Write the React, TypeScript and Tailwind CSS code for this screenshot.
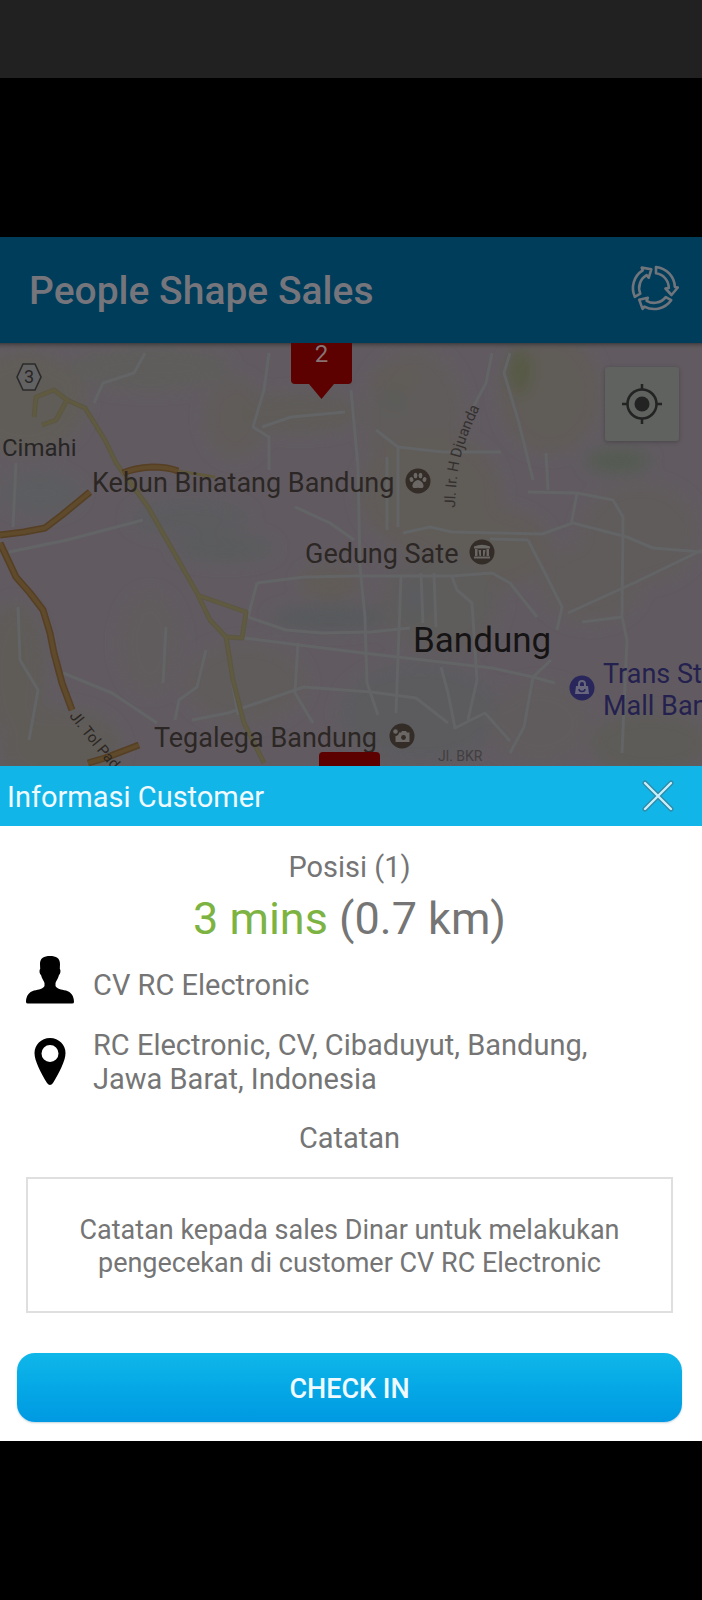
import type { ReactNode } from "react";

const patches: [number, number, number, number, string][] = [
  [25, 60, 60, 50, "#605d59"],
  [150, 25, 80, 22, "#5e5d5b"],
  [235, 75, 30, 40, "#605b5a"],
  [300, 70, 60, 20, "#5f5b59"],
  [40, 150, 40, 20, "#5b5d60"],
  [190, 175, 60, 18, "#5c5c5f"],
  [225, 205, 50, 14, "#5a5c5d"],
  [330, 275, 60, 12, "#565a5c"],
  [330, 240, 30, 16, "#605b57"],
  [15, 330, 30, 70, "#5f5c58"],
  [60, 405, 60, 40, "#5f5c58"],
  [150, 300, 30, 50, "#605b5d"],
  [415, 75, 50, 70, "#615c5b"],
  [550, 50, 50, 60, "#615c59"],
  [430, 150, 70, 60, "#605c59"],
  [490, 205, 60, 40, "#605b59"],
  [440, 260, 60, 50, "#5e5b5b"],
  [415, 255, 12, 20, "#5a5b61"],
  [640, 190, 60, 50, "#605c5c"],
  [590, 240, 50, 40, "#615c5b"],
  [420, 370, 80, 50, "#5b5c5e"],
  [650, 400, 60, 30, "#5d5c58"],
  [540, 380, 50, 40, "#615b5d"],
  [245, 340, 60, 40, "#605b5b"],
  [520, 28, 10, 24, "#545a40"],
  [618, 118, 32, 12, "#525b51"],
  [395, 58, 12, 10, "#585c58"],
  [395, 35, 24, 10, "#615c56"],
];

const minorRoads = [
  "M351 47 L358 124 L360 224 L365 274 L367 340 L378 372",
  "M387 114 L387 187 M398 104 L398 184 M401 234 L396 370",
  "M295 164 L330 180 L354 197",
  "M403 190 L430 184 L452 189 L542 191 L573 180 L627 194 L653 205 L702 209",
  "M257 240 L304 234 L358 233 L452 233 L492 230 L510 240 L537 274",
  "M248 274 L286 287 L322 290 L371 289 L410 285",
  "M244 295 L363 310 L492 325 L533 334 L555 340",
  "M192 377 L228 370 L304 344 L371 349 L416 355 L448 380",
  "M298 300 L295 350 L313 380",
  "M551 317 L533 334 L524 384 L510 410",
  "M528 197 L545 230 L562 264 L557 287",
  "M528 149 L577 150 L613 157 L623 174 L622 274 L627 297 L622 410",
  "M577 150 L571 182",
  "M568 270 L636 239 L702 207 M582 279 L622 274",
  "M492 10 L486 40 L470 70",
  "M510 10 L504 30 L519 80 L533 137 M546 110 L548 147",
  "M9 209 L67 197 L143 177",
  "M16 120 L13 184 M18 264 L20 317 L38 347 L29 397",
  "M63 330 L112 350 L157 380",
  "M166 284 L163 340 M206 307 L197 344 L179 357 L175 377",
  "M145 10 L134 30 L103 40 L94 60",
  "M269 10 L264 47 L253 84 L269 94 L269 127 M262 84 L291 74 L345 69",
  "M376 87 L398 104 L443 109 L501 109",
  "M421 230 L423 280 M434 230 L436 284",
  "M452 234 L457 247 L472 260 L477 337 L468 377",
  "M441 324 L448 350 L455 385 L485 370 L510 398",
  "M257 240 L248 274 M232 337 L238 372",
  "M490 196 L528 197",
];

const yellowRoads = [
  "M34 74 L36 54 L54 47 L67 57 L56 77 L42 82",
  "M67 57 L85 65 L105 97 L116 120 L148 164 L197 250 L210 277 L226 294 L233 337 L244 380 L264 420",
  "M197 252 L246 269 L242 295 L226 294",
];

const orangeRoads = [
  "M0 192 L24 189 L45 185 L62 172 L90 149",
  "M0 200 L16 234 L30 250 L43 267 L50 290 L54 310 L62 340 L72 367",
  "M123 130 Q134 125 152 124 Q168 124 178 128",
  "M88 420 L105 415 L139 402",
];

function MapCanvas() {
  return (
    <svg
      className="block h-full w-full"
      viewBox="0 0 702 423"
      preserveAspectRatio="xMinYMin slice"
      aria-hidden="true"
    >
      <defs>
        <filter id="soft" x="-50%" y="-50%" width="200%" height="200%">
          <feGaussianBlur stdDeviation="8" />
        </filter>
        <linearGradient id="shade" x1="0" y1="0" x2="0" y2="1">
          <stop offset="0" stopColor="#403d40" />
          <stop offset="1" stopColor="#5f5d5c" stopOpacity="0" />
        </linearGradient>
        <path id="djuanda" d="M455 165 C456 125 460 105 482 60" />
        <path id="tol" d="M69 373 L84 392 L112 426 L130 448" />
      </defs>
      <rect width="702" height="423" fill="#615b61" />
      <g filter="url(#soft)">
        {patches.map(([cx, cy, rx, ry, fill], i) => (
          <ellipse key={i} cx={cx} cy={cy} rx={rx} ry={ry} fill={fill} />
        ))}
      </g>
      <g fill="none" stroke="#636466" strokeWidth="3" strokeLinejoin="round">
        {minorRoads.map((d) => (
          <path key={d} d={d} />
        ))}
      </g>
      <g fill="none" strokeLinejoin="round">
        <path d="M178 128 L215 134" stroke="#5f583c" strokeWidth="3" />
        {yellowRoads.map((d) => (
          <path key={d} d={d} stroke="#5b5744" strokeWidth="5" />
        ))}
        {yellowRoads.map((d) => (
          <path key={d} d={d} stroke="#5f5a40" strokeWidth="3" />
        ))}
        {orangeRoads.map((d) => (
          <path key={d} d={d} stroke="#563f24" strokeWidth="7" />
        ))}
        {orangeRoads.map((d) => (
          <path key={d} d={d} stroke="#5f4b2b" strokeWidth="4" />
        ))}
      </g>
      <g fontFamily="Roboto, sans-serif" fill="#33302f">
        <text fontSize="15">
          <textPath href="#djuanda">Jl. Ir. H Djuanda</textPath>
        </text>
        <text fontSize="15" fill="#2b2622">
          <textPath href="#tol">Jl. Tol Pad</textPath>
        </text>
      </g>
      <path
        d="M17 34 L23 21 H35 L41 34 L35 47 H23 Z"
        fill="#636263"
        stroke="#2c2b2b"
        strokeWidth="1.6"
      />
      <rect width="702" height="7" fill="url(#shade)" />
    </svg>
  );
}

function Poi({ className, children }: { className: string; children: ReactNode }) {
  return (
    <svg className={`absolute size-[26px] ${className}`} viewBox="0 0 26 26" aria-hidden="true">
      {children}
    </svg>
  );
}

function RefreshIcon() {
  const arrow =
    "M2 -21 A21 21 0 0 1 20.900 -1 L23.800 -0.500 L17.500 7 L11.500 0.500 L14.800 0 A14.800 14.800 0 0 0 2 -14.700 Z";
  return (
    <svg
      className="size-[50px]"
      viewBox="-25 -25 50 50"
      fill="none"
      stroke="#70757c"
      strokeWidth="2.600"
      strokeLinejoin="round"
      aria-hidden="true"
    >
      {[0, 120, 240].map((angle) => (
        <path key={angle} d={arrow} transform={`rotate(${angle})`} />
      ))}
    </svg>
  );
}

export default function App() {
  return (
    <div className="flex min-h-screen flex-col bg-black font-['Roboto',sans-serif] text-[#757575]">
      <div className="h-[78px] bg-[#212121]" />
      <div className="h-[159px]" />

      <header className="flex h-[106px] items-center justify-between bg-[#003d5b] pr-[23px] pl-[29px]">
        <h1 className="pt-0.5 text-[39px] leading-[48px] font-medium text-[#76757b]">People Shape Sales</h1>
        <button type="button" aria-label="Refresh" className="-mt-1">
          <RefreshIcon />
        </button>
      </header>

      <section aria-label="Map" className="relative h-[423px] overflow-hidden text-[27px] leading-8 whitespace-nowrap text-[#2c2724]">
        <MapCanvas />

        <span className="absolute top-[22px] left-[24px] text-[18px] leading-6 text-[#272626]">3</span>
        <span className="absolute top-[89px] left-[2px] text-[24px] text-[#272525]">Cimahi</span>
        <span className="absolute top-[124px] left-[92px]">Kebun Binatang Bandung</span>
        <span className="absolute top-[195px] left-[305px]">Gedung Sate</span>
        <span className="absolute top-[276px] left-[413px] text-[35px] leading-[44px] text-[#151314]">Bandung</span>
        <span className="absolute top-[315px] left-[603px] text-[#24214f]">
          Trans St
          <br />
          Mall Ban
        </span>
        <span className="absolute top-[379px] left-[154px]">Tegalega Bandung</span>
        <span className="absolute top-[401px] left-[438px] text-[14px] leading-6 text-[#413f40]">Jl. BKR</span>

        <Poi className="top-[125px] left-[405px]">
          <circle cx="13" cy="13" r="12.5" fill="#332c27" />
          <g fill="#6b6765">
            <ellipse cx="6.500" cy="11.500" rx="1.900" ry="2.500" transform="rotate(-20 6.500 11.500)" />
            <ellipse cx="10.500" cy="7.500" rx="1.900" ry="2.700" />
            <ellipse cx="15.500" cy="7.500" rx="1.900" ry="2.700" />
            <ellipse cx="19.500" cy="11.500" rx="1.900" ry="2.500" transform="rotate(20 19.500 11.500)" />
            <path d="M13 12 C16 12 19 16 18.500 18.500 C18 21 15 19.800 13 19.800 C11 19.800 8 21 7.500 18.500 C7 16 10 12 13 12 Z" />
          </g>
        </Poi>
        <Poi className="top-[196px] left-[469px]">
          <circle cx="13" cy="13" r="12.5" fill="#332c27" />
          <path
            d="M5 7.500 Q13 4 21 7.500 V9.500 H5 Z M5 17.500 H21 V19.500 H5 Z M6 10 H8.500 V17 H6 Z M17.500 10 H20 V17 H17.500 Z M9.500 11 H12 V17 H10.500 Z M16.500 11 H14 V17 H15.500 Z"
            fill="#6b6765"
          />
        </Poi>
        <Poi className="top-[332px] left-[569px]">
          <circle cx="13" cy="13" r="12.5" fill="#28265b" />
          <path d="M7 11 H19 L20 19 H6 Z" fill="#67667c" />
          <path d="M10 11 V9 A3 3 0 0 1 16 9 V11" fill="none" stroke="#67667c" strokeWidth="2" />
          <path d="M10 14 A3 2.500 0 0 0 16 14" fill="none" stroke="#28265b" strokeWidth="1.400" />
        </Poi>
        <Poi className="top-[380px] left-[389px]">
          <circle cx="13" cy="13" r="12.5" fill="#332c27" />
          <path d="M10 9.500 H12 L13 8 H17 L18 9.500 H20.500 V19 H6.500 V13 A4 4 0 0 0 10 9.500 Z" fill="#6b6765" />
          <circle cx="14.500" cy="14.500" r="2.400" fill="#332c27" />
          <circle cx="6.500" cy="8.500" r="2.300" fill="#6b6765" />
        </Poi>

        <div className="absolute top-0 left-[291px] h-[58px] w-[61px] text-center text-[24px] leading-[22px] text-[#887273]">
          <svg className="absolute inset-0 h-full w-full" viewBox="0 0 61 58" aria-hidden="true">
            <path d="M0 0 H61 V37 Q61 41 57 41 H43 L30.500 56 L18 41 H4 Q0 41 0 37 Z" fill="#5c0000" />
          </svg>
          <span className="relative">2</span>
        </div>
        <div className="absolute top-[409px] left-[319px] h-6 w-[61px] rounded-[4px] bg-[#5c0000]" />

        <button
          type="button"
          aria-label="My location"
          className="absolute top-[24px] right-[23px] flex size-[74px] items-center justify-center rounded-[3px] bg-[#5f625f] shadow-[0_1px_4px_rgba(0,0,0,0.25)]"
        >
          <svg className="size-[42px]" viewBox="0 0 42 42" fill="none" stroke="#222322" strokeWidth="2.5" aria-hidden="true">
            <circle cx="21" cy="21" r="14.500" />
            <circle cx="21" cy="21" r="7.500" fill="#222322" stroke="none" />
            <path d="M21 1 V7 M21 35 V41 M1 21 H7 M35 21 H41" />
          </svg>
        </button>
      </section>

      <section aria-labelledby="sheet-title" className="bg-white">
        <div className="flex h-[60px] items-center justify-between bg-[#12b5e8] pr-[28px] pl-[7px]">
          <h2 id="sheet-title" className="pt-0.5 text-[29px] leading-9 text-[#effaff]">Informasi Customer</h2>
          <button type="button" aria-label="Close">
            <svg className="size-8" viewBox="0 0 32 32" fill="none" strokeLinecap="round" aria-hidden="true">
              <path d="M3 3 L29 29 M29 3 L3 29" stroke="#2f8aa5" strokeWidth="5" />
              <path d="M3 3 L29 29 M29 3 L3 29" stroke="#c9effa" strokeWidth="2.400" />
            </svg>
          </button>
        </div>

        <div className="flex flex-col pt-[23px] pr-5 pb-[19px] pl-[17px] text-[29px]">
          <p className="text-center leading-9">Posisi (1)</p>
          <p className="mt-[5px] text-center text-[45px] leading-[58px]">
            <span className="text-[#7cb342]">3 mins</span> (0.7 km)
          </p>

          <div className="mt-2 flex items-end gap-[19px] pl-[9px]">
            <svg className="size-12 shrink-0" viewBox="0 0 48 48" aria-hidden="true">
              <path
                d="M24 0 C30 0 34 2 34 8 L33.800 13 C35 14 34.500 18 33 19 C32 23 30 25 29.500 27 V30 C31 33 35 33.500 40 34.500 C45 36 48 40 48 46 Q48 47.500 46 47.500 H2 Q0 47.500 0 46 C0 40 3 36 8 34.500 C13 33.500 17 33 18.500 30 V27 C18 25 16 23 15 19 C13.500 18 13 14 14.200 13 L14 8 C14 2 18 0 24 0 Z"
                fill="#000"
              />
            </svg>
            <p className="leading-[38px]">CV RC Electronic</p>
          </div>

          <div className="mt-6 flex items-center gap-[19px] pl-[9px]">
            <svg className="size-12 shrink-0" viewBox="0 0 48 48" aria-hidden="true">
              <path
                d="M24 0 C33 0 39.500 7 39.500 15 C39.500 23 33 35 27 45 Q24 49 21 45 C15 35 8.500 23 8.500 15 C8.500 7 15 0 24 0 Z M24 7 A8.500 8.500 0 1 0 24 24 A8.500 8.500 0 1 0 24 7 Z"
                fill="#000"
                fillRule="evenodd"
              />
            </svg>
            <p className="max-w-[540px] leading-[34px]">RC Electronic, CV, Cibaduyut, Bandung, Jawa Barat, Indonesia</p>
          </div>

          <h3 className="mt-6 text-center leading-9">Catatan</h3>
          <p className="mx-[9px] mt-[21px] border-2 border-[#e0dfe0] px-10 pt-[35px] pb-[31px] text-center text-[27px] leading-[33px]">
            Catatan kepada sales Dinar untuk melakukan pengecekan di customer CV RC Electronic
          </p>

          <button
            type="button"
            className="mt-10 h-[69px] rounded-[18px] bg-linear-to-b from-[#0fb7e9] to-[#0099e2] pt-1 text-[27px] font-medium text-[#effaff] shadow-[0_1px_2px_rgba(0,80,120,0.25)]"
          >
            CHECK IN
          </button>
        </div>
      </section>
    </div>
  );
}
